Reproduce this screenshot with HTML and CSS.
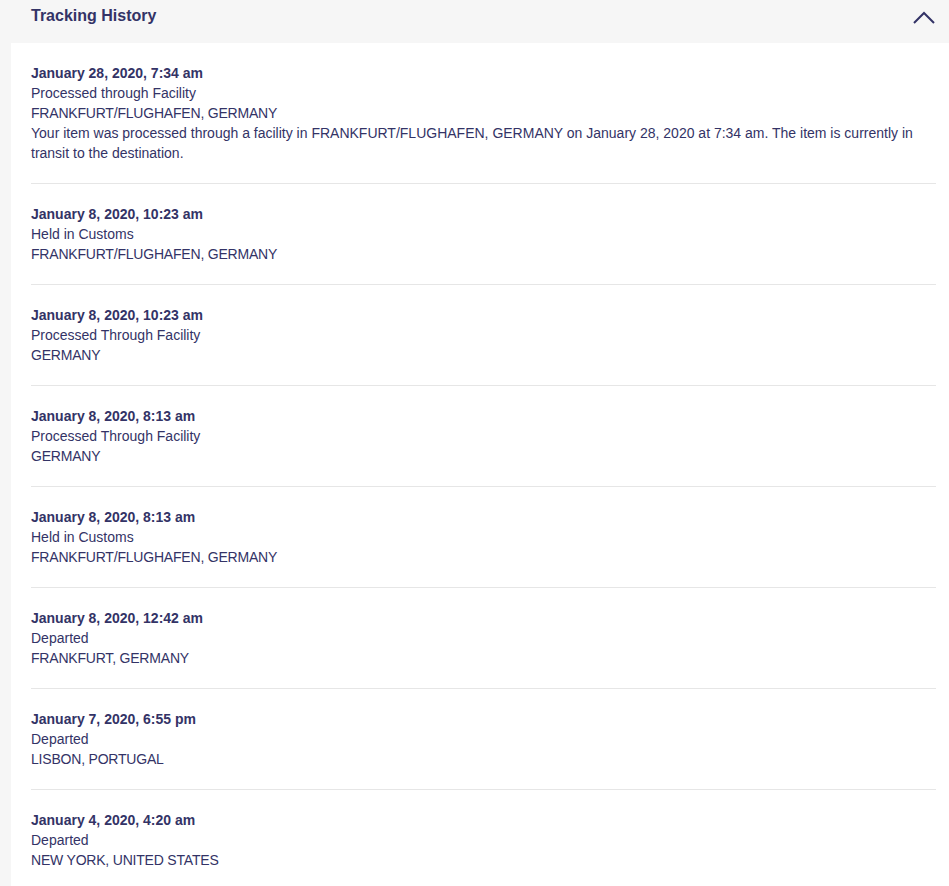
FILE: index.html
```html
<!DOCTYPE html>
<html lang="en">
<head>
    <meta charset="UTF-8">
    <title>Tracking History</title>
    <link rel="stylesheet" href="styles.css">
</head>
<body>
    <div class="history">
        <div class="history-header">
            <h2>Tracking History</h2>
            <svg class="chevron" width="22" height="14" viewBox="0 0 22 14">
                <path d="M1 12 L11 2 L21 12" fill="none" stroke="#333366" stroke-width="2"/>
            </svg>
        </div>

        <div class="history-body">
            <div class="event">
                <p class="event-date">January 28, 2020, 7:34 am</p>
                <p>Processed through Facility</p>
                <p class="event-location">FRANKFURT/FLUGHAFEN, GERMANY</p>
                <p>Your item was processed through a facility in FRANKFURT/FLUGHAFEN, GERMANY on January 28, 2020 at 7:34 am. The item is currently in transit to the destination.</p>
            </div>
            <div class="event">
                <p class="event-date">January 8, 2020, 10:23 am</p>
                <p>Held in Customs</p>
                <p class="event-location">FRANKFURT/FLUGHAFEN, GERMANY</p>
            </div>
            <div class="event">
                <p class="event-date">January 8, 2020, 10:23 am</p>
                <p>Processed Through Facility</p>
                <p class="event-location">GERMANY</p>
            </div>
            <div class="event">
                <p class="event-date">January 8, 2020, 8:13 am</p>
                <p>Processed Through Facility</p>
                <p class="event-location">GERMANY</p>
            </div>
            <div class="event">
                <p class="event-date">January 8, 2020, 8:13 am</p>
                <p>Held in Customs</p>
                <p class="event-location">FRANKFURT/FLUGHAFEN, GERMANY</p>
            </div>
            <div class="event">
                <p class="event-date">January 8, 2020, 12:42 am</p>
                <p>Departed</p>
                <p class="event-location">FRANKFURT, GERMANY</p>
            </div>
            <div class="event">
                <p class="event-date">January 7, 2020, 6:55 pm</p>
                <p>Departed</p>
                <p class="event-location">LISBON, PORTUGAL</p>
            </div>
            <div class="event">
                <p class="event-date">January 4, 2020, 4:20 am</p>
                <p>Departed</p>
                <p class="event-location">NEW YORK, UNITED STATES</p>
            </div>
        </div>
    </div>
</body>
</html>
```

FILE: styles.css
```css
body {
    margin: 0;
    padding: 0;
    background-color: #f6f6f6;
    font-family: "Liberation Sans", Arial, sans-serif;
    color: #333366;
}
.history {
    padding-left: 11px;
}
.history-header {
    display: flex;
    justify-content: space-between;
    align-items: center;
    height: 43px;
    padding: 0 14px 0 20px;
}
.history-header h2 {
    margin: 0;
    font-size: 16px;
    font-weight: bold;
    position: relative;
    top: -6px;
}
.chevron {
    position: relative;
    top: -4px;
}
.history-body {
    background-color: #fff;
    padding: 0 13px 0 20px;
}
.event {
    padding: 20px 0;
    border-bottom: 1px solid #e6e6e6;
}
.event:last-child {
    border-bottom: none;
}
.event p {
    margin: 0;
    font-size: 14px;
    line-height: 20px;
}
.event .event-date {
    font-weight: bold;
}
.event .event-location {
    letter-spacing: -0.2px;
}
```
